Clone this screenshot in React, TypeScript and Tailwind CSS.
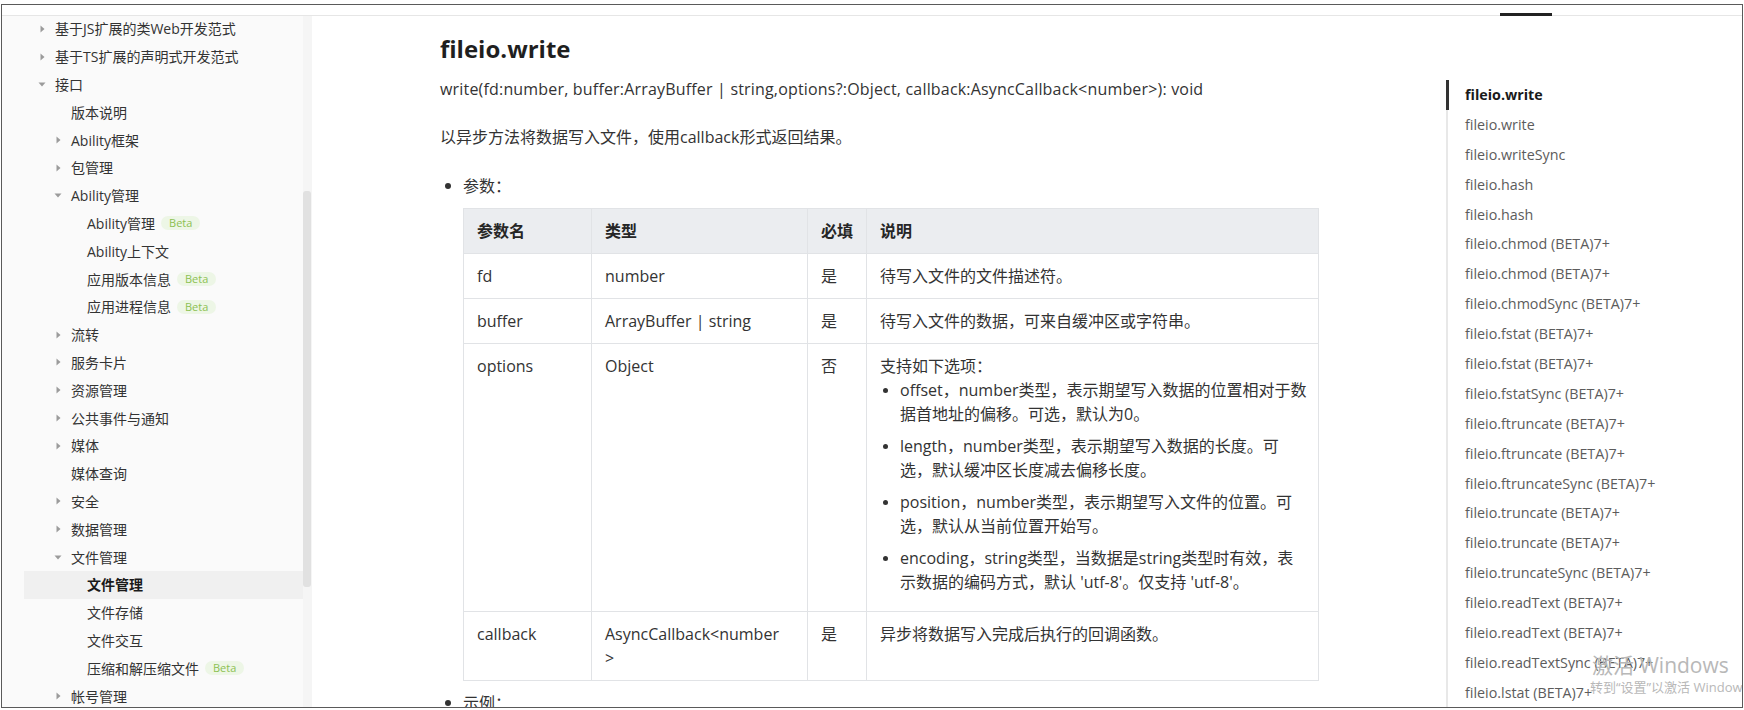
import React from "react";

type NavItem = {
  label: string;
  level: 0 | 1 | 2;
  arrow?: "right" | "down";
  beta?: boolean;
  active?: boolean;
};

const nav: NavItem[] = [
  { label: "基于JS扩展的类Web开发范式", level: 0, arrow: "right" },
  { label: "基于TS扩展的声明式开发范式", level: 0, arrow: "right" },
  { label: "接口", level: 0, arrow: "down" },
  { label: "版本说明", level: 1 },
  { label: "Ability框架", level: 1, arrow: "right" },
  { label: "包管理", level: 1, arrow: "right" },
  { label: "Ability管理", level: 1, arrow: "down" },
  { label: "Ability管理", level: 2, beta: true },
  { label: "Ability上下文", level: 2 },
  { label: "应用版本信息", level: 2, beta: true },
  { label: "应用进程信息", level: 2, beta: true },
  { label: "流转", level: 1, arrow: "right" },
  { label: "服务卡片", level: 1, arrow: "right" },
  { label: "资源管理", level: 1, arrow: "right" },
  { label: "公共事件与通知", level: 1, arrow: "right" },
  { label: "媒体", level: 1, arrow: "right" },
  { label: "媒体查询", level: 1 },
  { label: "安全", level: 1, arrow: "right" },
  { label: "数据管理", level: 1, arrow: "right" },
  { label: "文件管理", level: 1, arrow: "down" },
  { label: "文件管理", level: 2, active: true },
  { label: "文件存储", level: 2 },
  { label: "文件交互", level: 2 },
  { label: "压缩和解压缩文件", level: 2, beta: true },
  { label: "帐号管理", level: 1, arrow: "right" },
];

const indent = ["pl-[12px]", "pl-[28px]", "pl-[44px]"];

const toc = [
  "fileio.write",
  "fileio.write",
  "fileio.writeSync",
  "fileio.hash",
  "fileio.hash",
  "fileio.chmod (BETA)7+",
  "fileio.chmod (BETA)7+",
  "fileio.chmodSync (BETA)7+",
  "fileio.fstat (BETA)7+",
  "fileio.fstat (BETA)7+",
  "fileio.fstatSync (BETA)7+",
  "fileio.ftruncate (BETA)7+",
  "fileio.ftruncate (BETA)7+",
  "fileio.ftruncateSync (BETA)7+",
  "fileio.truncate (BETA)7+",
  "fileio.truncate (BETA)7+",
  "fileio.truncateSync (BETA)7+",
  "fileio.readText (BETA)7+",
  "fileio.readText (BETA)7+",
  "fileio.readTextSync (BETA)7+",
  "fileio.lstat (BETA)7+",
];

const optionItems = [
  ["offset，number类型，表示期望写入数据的位置相对于数", "据首地址的偏移。可选，默认为0。"],
  ["length，number类型，表示期望写入数据的长度。可", "选，默认缓冲区长度减去偏移长度。"],
  ["position，number类型，表示期望写入文件的位置。可", "选，默认从当前位置开始写。"],
  ["encoding，string类型，当数据是string类型时有效，表", "示数据的编码方式，默认 'utf-8'。仅支持 'utf-8'。"],
];

const Arrow = ({ dir }: { dir?: "right" | "down" }) => {
  if (dir === "right")
    return (
      <svg width="5" height="8" viewBox="0 0 5 8">
        <path d="M0.5 0.5 L4.5 4 L0.5 7.5Z" fill="#9b9b9b" />
      </svg>
    );
  if (dir === "down")
    return (
      <svg width="8" height="5" viewBox="0 0 8 5">
        <path d="M0.5 0.5 H7.5 L4 4.5Z" fill="#9b9b9b" />
      </svg>
    );
  return null;
};

const Beta = () => (
  <span className="ml-[6px] h-[14px] px-[8px] rounded-full bg-[#edf6e6] text-[11px] leading-[14px] text-[#8cc152] font-normal">
    Beta
  </span>
);

const Sidebar = () => (
  <div className="flex w-[310px] shrink-0 bg-[#fafafa]">
    <div className="flex-1 -mt-[1px]">
      {nav.map((item, i) => (
        <div
          key={i}
          className={`ml-[22px] flex h-[27.8px] items-center text-[14px] ${indent[item.level]} ${
            item.active ? "bg-[#f0f0f0] font-bold text-[#1a1a1a]" : "text-[#333]"
          }`}
        >
          <span className="flex w-[12px] justify-center">
            <Arrow dir={item.arrow} />
          </span>
          <span className="ml-[7px] whitespace-nowrap">{item.label}</span>
          {item.beta && <Beta />}
        </div>
      ))}
    </div>
    <div className="w-[9px] shrink-0 bg-[#f5f5f5]">
      <div className="mt-[175px] h-[396px] w-[8px] rounded-[3px] bg-[#e1e1e1]" />
    </div>
  </div>
);

const Bullet = ({ children }: { children: React.ReactNode }) => (
  <div className="flex">
    <span className="flex h-[24px] w-[23px] shrink-0 items-center">
      <span className="ml-[5px] h-[6px] w-[6px] rounded-full bg-[#333]" />
    </span>
    <div className="flex-1">{children}</div>
  </div>
);

const cell = "border border-[#e1e3e6] px-[13px] py-[10px] align-top leading-[24px]";

const ParamTable = () => (
  <table className="mt-[10px] w-[855px] table-fixed border-collapse text-[16px] text-[#333]">
    <colgroup>
      <col className="w-[128px]" />
      <col className="w-[216px]" />
      <col className="w-[59px]" />
      <col className="w-[452px]" />
    </colgroup>
    <thead>
      <tr className="bg-[#ebedf0] font-bold text-[#262626]">
        <th className={`${cell} text-left`}>参数名</th>
        <th className={`${cell} text-left`}>类型</th>
        <th className={`${cell} text-left`}>必填</th>
        <th className={`${cell} text-left`}>说明</th>
      </tr>
    </thead>
    <tbody>
      <tr>
        <td className={cell}>fd</td>
        <td className={cell}>number</td>
        <td className={cell}>是</td>
        <td className={cell}>待写入文件的文件描述符。</td>
      </tr>
      <tr>
        <td className={cell}>buffer</td>
        <td className={cell}>ArrayBuffer | string</td>
        <td className={cell}>是</td>
        <td className={cell}>待写入文件的数据，可来自缓冲区或字符串。</td>
      </tr>
      <tr>
        <td className={cell}>options</td>
        <td className={cell}>Object</td>
        <td className={cell}>否</td>
        <td className={`${cell} pb-[17px]`}>
          <div>支持如下选项：</div>
          <div className="flex flex-col gap-[8px]">
            {optionItems.map((lines, i) => (
              <div key={i} className="flex">
                <span className="flex h-[24px] w-[20px] shrink-0 items-center">
                  <span className="ml-[3px] h-[5px] w-[5px] rounded-full bg-[#333]" />
                </span>
                <div className="whitespace-nowrap">
                  {lines.map((l, j) => (
                    <div key={j}>{l}</div>
                  ))}
                </div>
              </div>
            ))}
          </div>
        </td>
      </tr>
      <tr>
        <td className={cell}>callback</td>
        <td className={`${cell} whitespace-nowrap`}>
          AsyncCallback&lt;number
          <br />
          &gt;
        </td>
        <td className={cell}>是</td>
        <td className={cell}>异步将数据写入完成后执行的回调函数。</td>
      </tr>
    </tbody>
  </table>
);

const Toc = () => (
  <div className="ml-[128px] mt-[64px] flex-1 border-l-2 border-[#e8e8e8]">
    {toc.map((t, i) => (
      <div
        key={i}
        className={`relative h-[29.9px] pl-[17px] text-[14.3px] leading-[29.9px] whitespace-nowrap ${
          i === 0 ? "font-bold text-[#1a1a1a]" : "text-[#5c5c5c]"
        }`}
      >
        {i === 0 && <span className="absolute -left-[2.5px] top-0 h-[30px] w-[3px] bg-[#333]" />}
        {t}
      </div>
    ))}
  </div>
);

export default function App() {
  return (
    <div className="h-[710px] w-[1744px] overflow-hidden bg-white pt-[4px] pl-[1px] font-['Open_Sans','Noto_Sans_CJK_SC',sans-serif]">
      <div className="relative flex h-[704px] w-[1742px] flex-col overflow-hidden border border-[#5a5a5a] bg-white">
        <div className="relative h-[11px] shrink-0 border-b border-[#e6e6e6]">
          <span className="absolute bottom-[-1px] left-[1498px] h-[3px] w-[52px] bg-[#222]" />
        </div>
        <div className="flex min-h-0 flex-1">
          <Sidebar />
          <div className="flex flex-1">
            <div className="w-[1006px] shrink-0 pl-[128px] text-[#333]">
              <h1 className="mt-[15px] text-[24px] font-bold leading-[36px] text-[#1f1f1f]">fileio.write</h1>
              <p className="mt-[10px] text-[16px] leading-[24px] tracking-[0.18px]">
                write(fd:number, buffer:ArrayBuffer | string,options?:Object, callback:AsyncCallback&lt;number&gt;): void
              </p>
              <p className="mt-[24px] text-[16px] leading-[24px]">以异步方法将数据写入文件，使用callback形式返回结果。</p>
              <div className="mt-[25px] text-[16px] leading-[24px]">
                <Bullet>
                  <div>参数：</div>
                  <ParamTable />
                </Bullet>
                <div className="mt-[10px]">
                  <Bullet>
                    <div>示例：</div>
                  </Bullet>
                </div>
              </div>
            </div>
            <Toc />
          </div>
        </div>
        <div className="absolute left-[1590px] top-[647px] whitespace-nowrap text-[#b8b8b8]">
          <div className="text-[21px] leading-[27px]">激活 Windows</div>
          <div className="-ml-[2px] text-[13px] leading-[17px]">转到“设置”以激活 Windows。</div>
        </div>
      </div>
    </div>
  );
}
